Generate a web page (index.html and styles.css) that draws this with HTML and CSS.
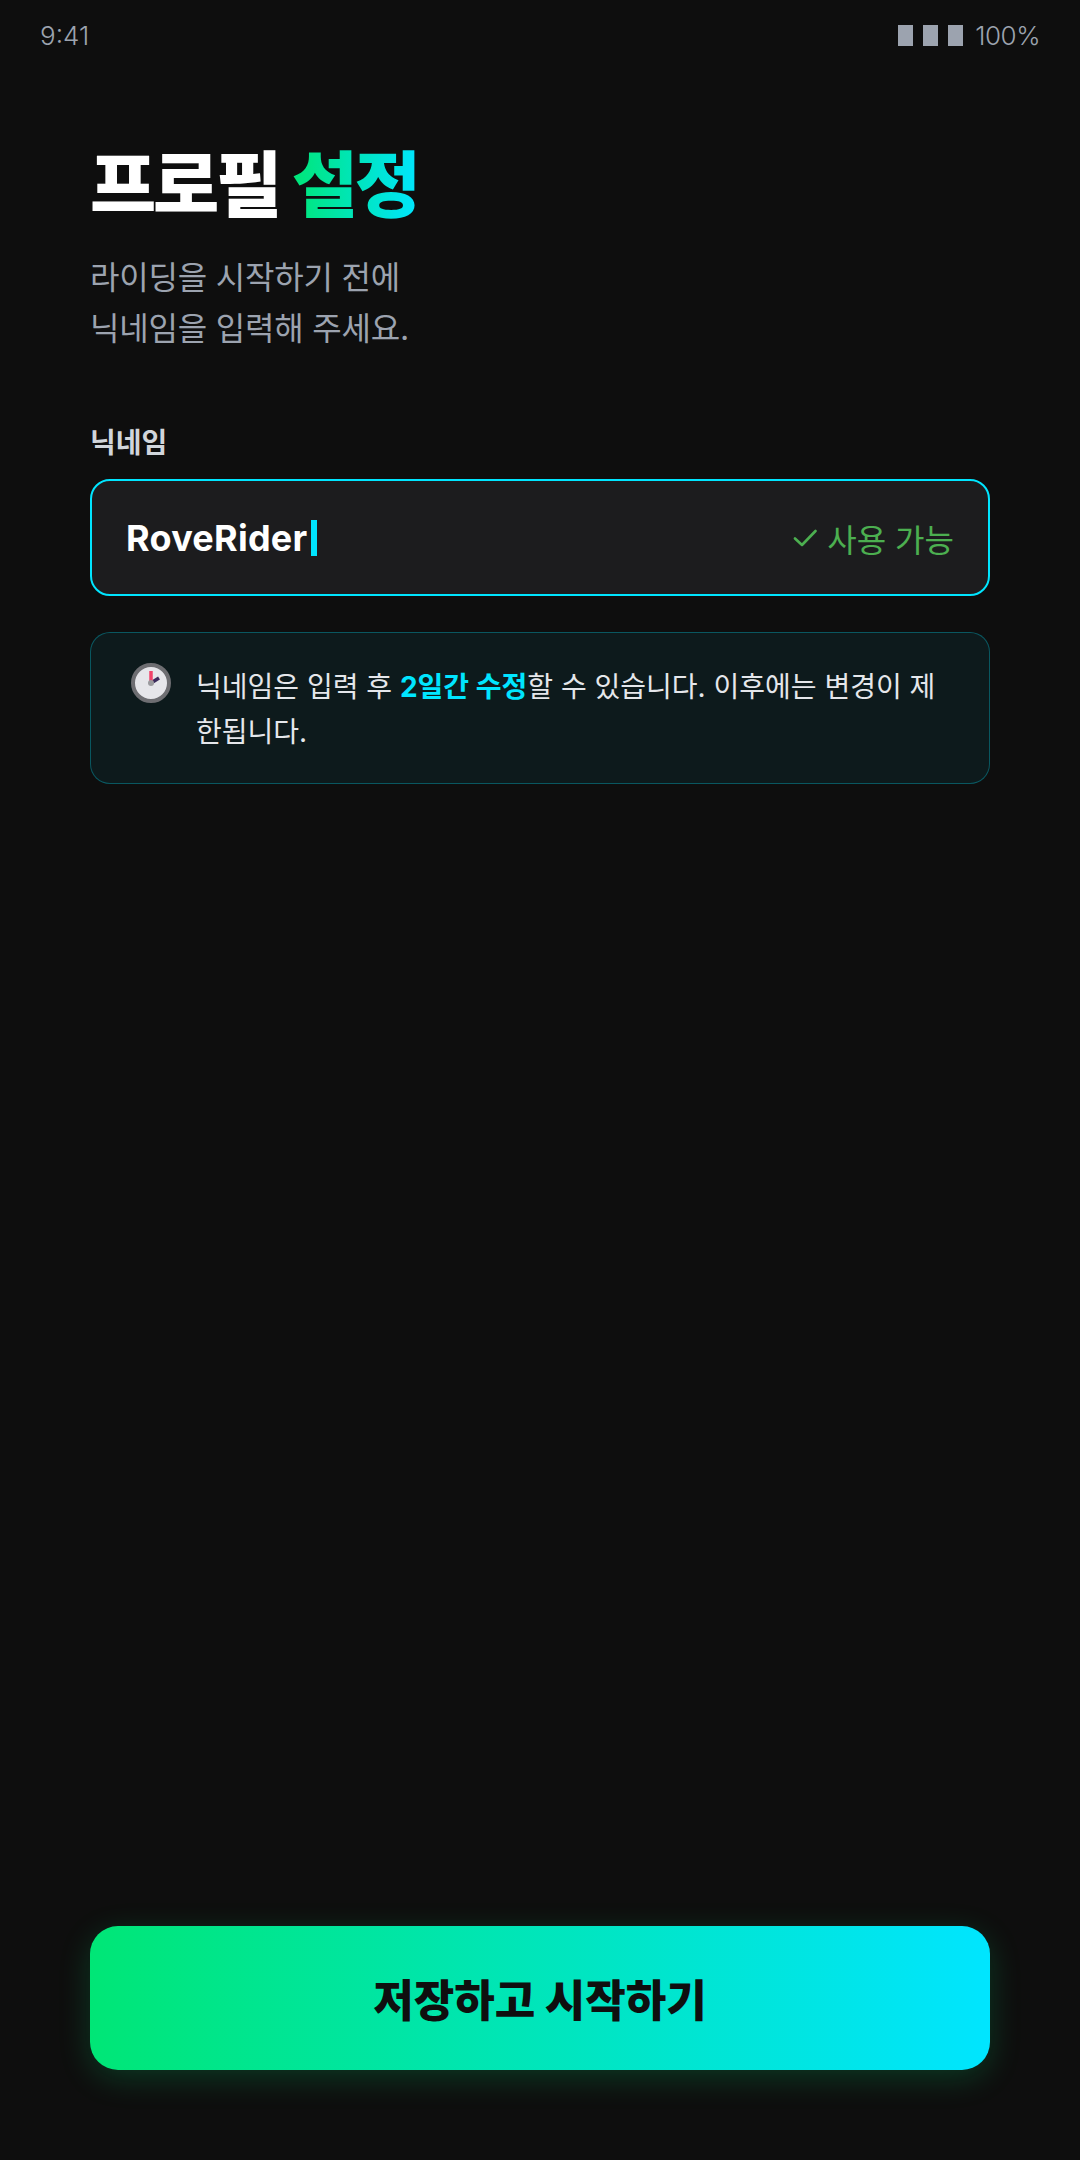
FILE: index.html
```html
<!DOCTYPE html>
<html lang="ko">
<head>
    <meta charset="UTF-8">
    <meta name="viewport" content="width=device-width, initial-scale=1.0">
    <title>프로필 설정</title>
    <link rel="stylesheet" href="styles.css">
</head>
<body>
    <div class="status-bar">
      <span>9:41</span>
      <div class="status-right">
        <i class="bar"></i>
        <i class="bar"></i>
        <i class="bar"></i>
        <span>100%</span>
      </div>
    </div>

    <main class="content">
      <h1 class="title">프로필 <span class="accent">설정</span></h1>
      <p class="subtitle">라이딩을 시작하기 전에<br>닉네임을 입력해 주세요.</p>

      <label class="label">닉네임</label>
      <div class="input-box">
        <div class="input-value">RoveRider<i class="caret"></i></div>
        <div class="input-ok">
          <svg class="check" viewBox="0 0 24 24" width="24" height="24" fill="none" stroke="#4caf50" stroke-width="2.6" stroke-linecap="round" stroke-linejoin="round"><path d="M2 12.5l7 6.5L22.500 5"/></svg>
          <span>사용 가능</span>
        </div>
      </div>

      <div class="notice">
        <svg class="notice-icon" viewBox="0 0 40 40" width="40" height="40">
          <circle cx="20" cy="20" r="18" fill="#e6e6ea" stroke="#6e6e72" stroke-width="4"/>
          <path d="M20 20L28 15" stroke="#3b2b5c" stroke-width="3.500"/>
          <path d="M20 20V8" stroke="#f0436a" stroke-width="3.500"/>
          <circle cx="20" cy="20" r="3" fill="#9a9a9e"/>
        </svg>
        <p class="notice-text">닉네임은 입력 후 <strong>2일간 수정</strong>할 수 있습니다. 이후에는 변경이 제한됩니다.</p>
      </div>

      <button class="save-btn">저장하고 시작하기</button>
    </main>
</body>
</html>
```

FILE: styles.css
```css
* {
    margin: 0;
    padding: 0;
    box-sizing: border-box;
}

body {
    width: 1080px;
    height: 2160px;
    background-color: #0e0e0e;
    color: #fff;
    font-family: Inter, "Noto Sans CJK KR", sans-serif;
    display: flex;
    flex-direction: column;
}

.status-bar {
    height: 70px;
    padding: 0 40px;
    display: flex;
    justify-content: space-between;
    align-items: center;
    font-size: 26px;
    font-weight: 300;
    color: #9ca3af;
}

.status-right {
    display: flex;
    align-items: center;
    gap: 10px;
}

.bar {
    width: 15px;
    height: 21px;
    background-color: #9ca3af;
}

.status-right span {
    margin-left: 2px;
    letter-spacing: -0.5px;
}

.content {
    flex: 1;
    display: flex;
    flex-direction: column;
    padding: 65px 90px 90px;
}

.title {
    font-size: 72px;
    font-weight: 800;
    line-height: 100px;
    letter-spacing: -3.2px;
}

.accent {
    background: linear-gradient(90deg, #00e676, #00e5ff);
    -webkit-background-clip: text;
    background-clip: text;
    color: transparent;
}

.subtitle {
    margin-top: 17px;
    font-size: 32px;
    line-height: 51px;
    letter-spacing: -0.2px;
    color: #9ca3af;
}

.label {
    margin-top: 69px;
    font-size: 28px;
    font-weight: 600;
    line-height: 40px;
    color: #d1d5db;
}

.input-box {
    margin-top: 16px;
    height: 117px;
    padding: 0 34px;
    display: flex;
    justify-content: space-between;
    align-items: center;
    background-color: #1c1c1e;
    border: 2px solid #00e5ff;
    border-radius: 20px;
}

.input-value {
    display: flex;
    align-items: center;
    font-size: 36px;
    font-weight: 700;
    letter-spacing: 0.25px;
}

.caret {
    width: 6px;
    height: 36px;
    margin-left: 4px;
    background-color: #00e5ff;
}

.input-ok {
    display: flex;
    align-items: center;
    gap: 10px;
    font-size: 32px;
    color: #4caf50;
}

.notice {
    margin-top: 36px;
    height: 152px;
    padding: 32px 36px 0 40px;
    display: flex;
    align-items: flex-start;
    gap: 25px;
    background-color: rgba(0, 229, 255, 0.06);
    border: 1px solid rgba(0, 229, 255, 0.3);
    border-radius: 20px;
}

.notice-icon {
    flex-shrink: 0;
    margin-top: -2px;
}

.notice-text {
    font-size: 28px;
    line-height: 45px;
    word-break: break-all;
    color: #e5e7eb;
}

.notice-text strong {
    color: #00e5ff;
    font-weight: 700;
}

.save-btn {
    margin-top: auto;
    height: 144px;
    border: none;
    border-radius: 28px;
    background: linear-gradient(90deg, #00e676, #00e5ff);
    box-shadow: 0 8px 32px rgba(0, 230, 118, 0.2);
    color: #0f0f0f;
    font-family: inherit;
    font-size: 44px;
    font-weight: 800;
}
```
